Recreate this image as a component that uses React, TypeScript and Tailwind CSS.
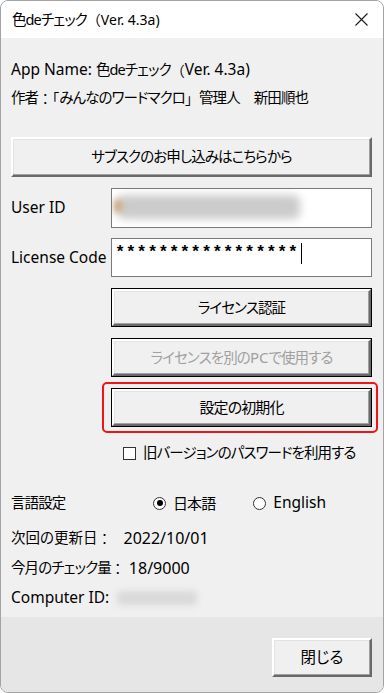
import React from 'react';

const base = "[font-family:'Noto_Sans','Noto_Sans_CJK_JP',sans-serif]";

// Japanese run: proportional kana, slightly smaller than the Latin text
function J({ children, className }: { children: React.ReactNode; className?: string }) {
    return <span className={`text-[14.5px] tracking-[-0.9px] [font-feature-settings:'palt'] ${className ?? ''}`}>{children}</span>;
}

// full-width punctuation keeps its full width
function P({ children }: { children: React.ReactNode }) {
    return <span className="text-[14px] [font-feature-settings:normal]">{children}</span>;
}

function ClassicButton({ children, className }: { children: React.ReactNode; className?: string }) {
    return (
        <div
            className={`flex items-center justify-center bg-[#f0f0f0] border-2 border-t-white border-l-white border-r-[#696969] border-b-[#696969] shadow-[inset_-1px_-1px_0_#a0a0a0,inset_1px_1px_0_#e3e3e3] text-black ${className ?? ''}`}
        >
            {children}
        </div>
    );
}

function DefaultButton({ children, disabled }: { children: React.ReactNode; disabled?: boolean }) {
    return (
        <div className="h-[39px] w-[261px] border border-black bg-[#f0f0f0]">
            <div
                className={`flex h-full w-full items-center justify-center border-2 border-t-white border-l-white border-r-[#696969] border-b-[#696969] shadow-[inset_-1px_-1px_0_#a0a0a0,inset_1px_1px_0_#e3e3e3] ${disabled ? 'text-[#a0a0a0]' : 'text-black'}`}
            >
                {children}
            </div>
        </div>
    );
}

export default function App() {
    return (
        <div className={`flex h-[693px] w-[384px] flex-col overflow-hidden rounded-[8px] border border-[#a3a3a3] bg-[#f0f0f0] text-black ${base}`}>
            {/* Title bar */}
            <div className="flex h-[37px] shrink-0 items-center justify-between bg-white pl-[11px] pr-[14px] text-[14px]">
                <span className="whitespace-nowrap">
                    <J className="text-[13.5px]">色deチェック</J><P>（</P>Ver. 4.3a)
                </span>
                <svg width="13" height="13" viewBox="0 0 13 13" className="mr-[1px]">
                    <path d="M0.5 0.5 L12.5 12.5 M12.5 0.5 L0.5 12.5" stroke="#1a1a1a" strokeWidth="1.1" />
                </svg>
            </div>

            {/* Body */}
            <div className="flex flex-1 flex-col pl-[10px] pr-[11px] pt-[18px] text-[15.5px]">
                <div className="flex h-[28px] items-center whitespace-nowrap">
                    <span>App Name:&nbsp;</span><J>色deチェック</J><P>（</P><span>Ver. 4.3a)</span>
                </div>
                <div className="flex h-[28px] items-center whitespace-nowrap">
                    <J>作者</J><P>：「</P><J>みんなのワードマクロ</J><P>」</P><J>管理人</J><P>　</P><J>新田順也</J>
                </div>

                <ClassicButton className="mt-[25px] h-[40px] w-full"><J>サブスクのお申し込みはこちらから</J></ClassicButton>

                <div className="mt-[11px] flex h-[40px] items-center">
                    <span className="w-[100px] shrink-0">User ID</span>
                    <div className="relative h-full flex-1 overflow-hidden border border-[#7a7a7a] bg-white">
                        <div className="absolute left-[6px] top-[6px] h-[24px] w-[182px] rounded-[6px] bg-[#cbcbcb] blur-[4px]" />
                        <div className="absolute left-[2px] top-[10px] h-[14px] w-[8px] rounded-full bg-[#c9a27c] blur-[3px]" />
                    </div>
                </div>

                <div className="mt-[10px] flex h-[39px] items-center">
                    <span className="w-[100px] shrink-0">License Code</span>
                    <div className="flex h-full flex-1 items-start border border-[#7a7a7a] bg-white pl-[3px] pt-[4px]">
                        <span className="text-[17px] font-bold leading-[20px] tracking-[0.6px] [font-family:'Liberation_Mono',monospace]">*****************</span>
                        <span className="ml-[2px] h-[21px] w-[1px] bg-black" />
                    </div>
                </div>

                <div className="mt-[11px] flex flex-col items-end gap-[11px]">
                    <DefaultButton><J>ライセンス認証</J></DefaultButton>
                    <DefaultButton disabled><J>ライセンスを別の</J><span className="text-[15px]">PC</span><J>で使用する</J></DefaultButton>
                    <div className="relative">
                        <div className="absolute -left-[9px] -right-[6px] -top-[6px] -bottom-[6px] rounded-[5px] border-2 border-[#f01414]" />
                        <DefaultButton><J className="text-[15px]">設定の初期化</J></DefaultButton>
                    </div>
                </div>

                <div className="mt-[16px] flex h-[20px] items-center whitespace-nowrap pl-[112px]">
                    <span className="h-[13px] w-[13px] shrink-0 border border-[#333333] bg-white" />
                    <J className="ml-[7px]">旧バージョンのパスワードを利用する</J>
                </div>

                <div className="mt-[25px] flex h-[30px] items-center">
                    <J className="w-[142px] shrink-0">言語設定</J>
                    <span className="flex h-[13px] w-[13px] items-center justify-center rounded-full border border-[#333333] bg-white">
                        <span className="h-[6px] w-[6px] rounded-full bg-black" />
                    </span>
                    <J className="ml-[7px] text-[15px] tracking-[-0.4px]">日本語</J>
                    <span className="ml-[38px] h-[13px] w-[13px] rounded-full border border-[#333333] bg-white" />
                    <span className="ml-[7px]">English</span>
                </div>

                <div className="mt-[5px] flex h-[30px] items-center whitespace-nowrap">
                    <J className="tracking-[0px]">次回の更新日</J><P>：</P>
                    <span className="ml-[12px] text-[16px]">2022/10/01</span>
                </div>
                <div className="flex h-[30px] items-center whitespace-nowrap">
                    <J>今月のチェック量</J><P>：</P>
                    <span className="ml-[4px] text-[16px]">18/9000</span>
                </div>
                <div className="flex h-[30px] items-center">
                    <span>Computer ID:</span>
                    <span className="ml-[8px] h-[14px] w-[80px] rounded-[4px] bg-[#d9d9d9] blur-[3px]" />
                </div>
            </div>

            {/* Footer */}
            <div className="flex h-[75px] shrink-0 items-start justify-end bg-[#e6e6e6] pr-[11px] pt-[21px]">
                <ClassicButton className="h-[39px] w-[100px]"><J className="text-[15.5px] tracking-[0px]">閉じる</J></ClassicButton>
            </div>
        </div>
    );
}
